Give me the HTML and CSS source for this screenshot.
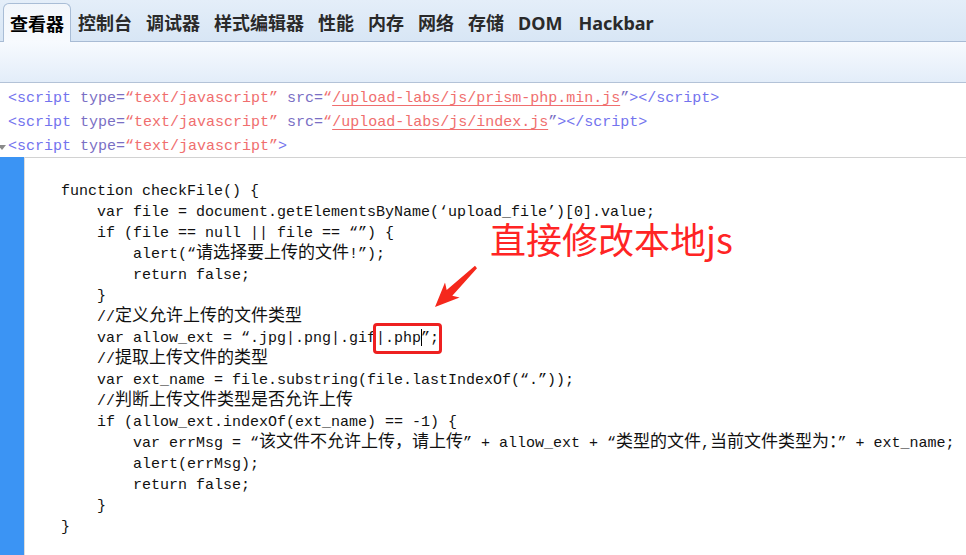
FILE: index.html
```html
<!DOCTYPE html>
<html lang="zh-CN">
<head>
<meta charset="utf-8">
<title>查看器</title>
<link rel="stylesheet" href="styles.css">
</head>
<body>
<div class="devtools">
  <nav class="tabs">
    <span class="tab active">查看器</span>
    <span class="tab">控制台</span>
    <span class="tab">调试器</span>
    <span class="tab">样式编辑器</span>
    <span class="tab">性能</span>
    <span class="tab">内存</span>
    <span class="tab">网络</span>
    <span class="tab">存储</span>
    <span class="tab">DOM</span>
    <span class="tab">Hackbar</span>
  </nav>
  <div class="toolbar"></div>
  <div class="markup">
    <div class="row"><span class="tag">&lt;script</span> <span class="attr">type=</span><span class="val">“text/javascript”</span> <span class="attr">src=</span><span class="val">“<span class="link">/upload-labs/js/prism-php.min.js</span></span><span class="attr">”</span><span class="tag">&gt;&lt;/script&gt;</span></div>
    <div class="row"><span class="tag">&lt;script</span> <span class="attr">type=</span><span class="val">“text/javascript”</span> <span class="attr">src=</span><span class="val">“<span class="link">/upload-labs/js/index.js</span></span><span class="attr">”</span><span class="tag">&gt;&lt;/script&gt;</span></div>
    <div class="row"><span class="twisty"></span><span class="tag">&lt;script</span> <span class="attr">type=</span><span class="val">“text/javascript”</span><span class="tag">&gt;</span></div>
  </div>
  <div class="editor">
    <div class="gutter"></div>
<pre class="code">    function checkFile() {
        var file = document.getElementsByName(‘upload_file’)[0].value;
        if (file == null || file == “”) {
            alert(“<span class="c">请选择要上传的文件</span>!”);
            return false;
        }
        //<span class="c">定义允许上传的文件类型</span>
        var allow_ext = “.jpg|.png|.gif<span class="box">|.php<span class="caret"></span>”;</span>
        //<span class="c">提取上传文件的类型</span>
        var ext_name = file.substring(file.lastIndexOf(“.”));
        //<span class="c">判断上传文件类型是否允许上传</span>
        if (allow_ext.indexOf(ext_name) == -1) {
            var errMsg = “<span class="c">该文件不允许上传，请上传</span>” + allow_ext + “<span class="c">类型的文件</span>,<span class="c">当前文件类型为：</span>” + ext_name;
            alert(errMsg);
            return false;
        }
    }</pre>
  </div>
</div>
<div class="note">直接修改本地js</div>
<svg class="arrow" viewBox="430 262 52 50" width="52" height="50" aria-hidden="true">
  <polygon points="477,268.2 452.3,295.7 459.6,297.6 435,307 445,282.4 446.7,289.9 475,265.8" fill="#f5281c"/>
</svg>
</body>
</html>
```
FILE: styles.css
```css
html, body {
  margin: 0;
  padding: 0;
}
body {
  width: 966px;
  height: 555px;
  overflow: hidden;
  background: #fff;
  position: relative;
}
.devtools {
  display: flex;
  flex-direction: column;
  height: 555px;
}
.tabs {
  height: 41px;
  flex: none;
  box-sizing: content-box;
  border-bottom: 1px solid #a8bbd4;
  background: linear-gradient(#e4eef9, #d8e6f5);
  display: flex;
  align-items: flex-end;
  padding-left: 3px;
  font-family: "Noto Sans", "Noto Sans CJK SC", sans-serif;
  font-weight: 700;
  font-size: 18px;
  color: #2a2a2a;
}
.tab {
  height: 38px;
  line-height: 40px;
  padding: 0 7px;
  white-space: nowrap;
}
.tab:last-child {
  padding-left: 9px;
}
.tab.active {
  padding: 0 6px;
  margin-bottom: -1px;
  border: 1px solid #a9bdd6;
  border-bottom: 0;
  border-radius: 6px 6px 0 0;
  background: linear-gradient(#f2f6fb, #f7fafe);
  color: #000;
}
.toolbar {
  height: 40px;
  flex: none;
  border-bottom: 1px solid #b3c2d7;
  background: linear-gradient(#f7fafe, #e3edf9);
}
.markup {
  flex: none;
  padding-top: 2px;
  font-family: "Liberation Mono", "Noto Sans CJK SC", monospace;
  font-size: 15px;
}
.row {
  height: 24px;
  line-height: 28px;
  padding-left: 8px;
  white-space: pre;
  position: relative;
}
.tag { color: #7373ee; }
.attr { color: #7a6fc4; }
.val { color: #f06e6e; }
.link {
  text-decoration: underline;
  text-underline-offset: 3px;
  text-decoration-color: #f06e6e;
}
.twisty {
  position: absolute;
  left: -2px;
  top: 12px;
  width: 0;
  height: 0;
  border-left: 4px solid transparent;
  border-right: 4px solid transparent;
  border-top: 5px solid #8a8a8a;
}
.editor {
  flex: 1;
  display: flex;
  border-top: 1px solid #d2d2d2;
}
.gutter {
  width: 24px;
  flex: none;
  margin-top: -1px;
  background: #3b94f4;
  border-right: 1px solid #dcdcdc;
}
.code {
  margin: 0;
  padding: 23px 0 0 0;
  font-family: "Liberation Mono", "Noto Sans CJK SC", monospace;
  font-size: 15px;
  line-height: 21px;
  color: #111;
  white-space: pre;
}
.c {
  font-family: "Noto Sans CJK SC", sans-serif;
  font-size: 17px;
  line-height: 0;
}
.box {
  border: 3px solid #ee2020;
  border-radius: 4px;
  padding: 4px 0;
  margin: 0 -3px;
}
.caret {
  display: inline-block;
  width: 1px;
  height: 17px;
  background: #000;
  vertical-align: -4px;
  margin-right: -1px;
  line-height: 0;
}
.note {
  position: absolute;
  left: 490px;
  top: 220px;
  font-family: "Noto Sans CJK SC", sans-serif;
  font-size: 36px;
  line-height: 1;
  color: #ff2424;
  white-space: nowrap;
}
.arrow {
  position: absolute;
  left: 430px;
  top: 262px;
}
```
